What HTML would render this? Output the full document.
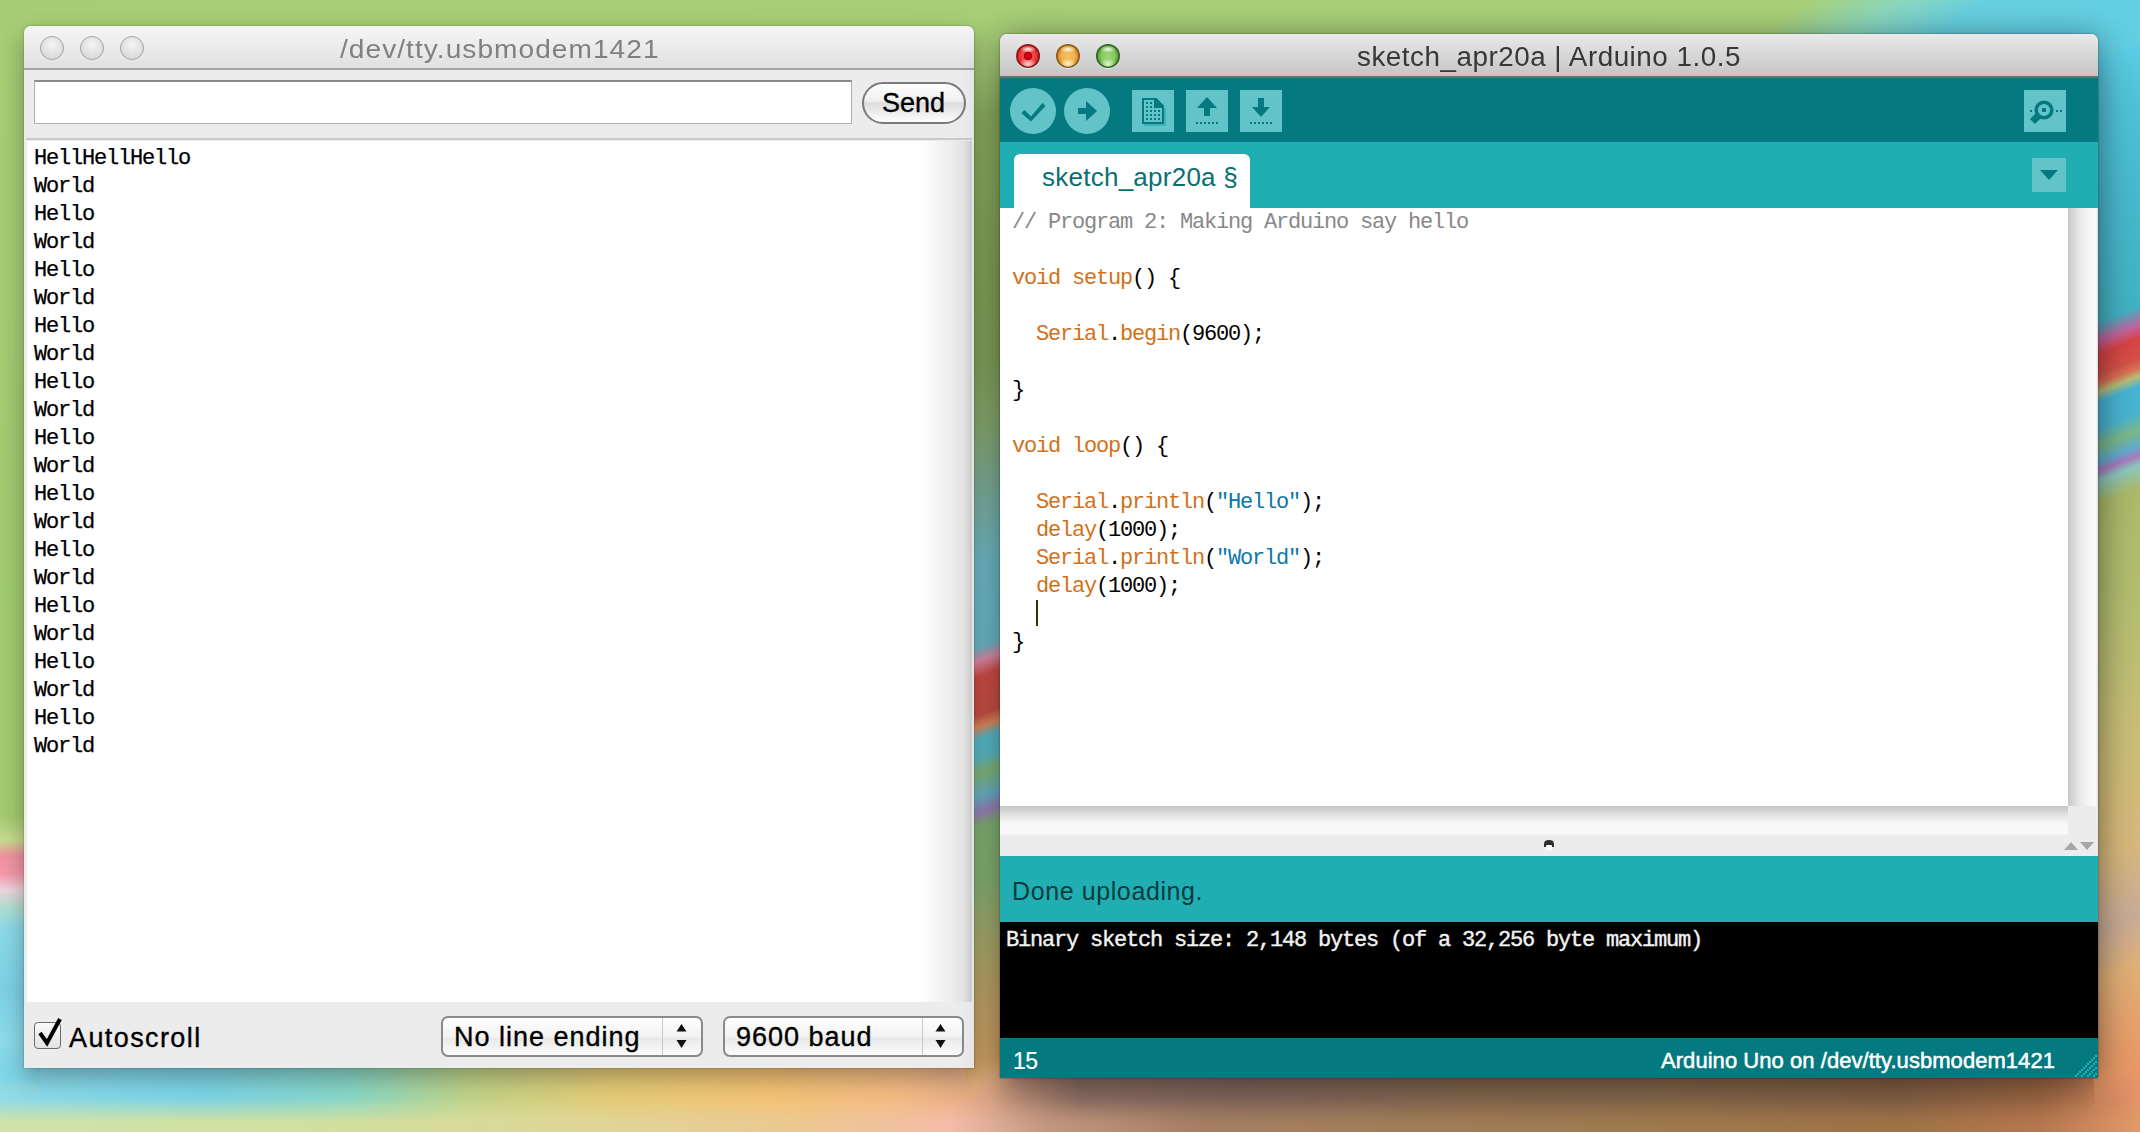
<!DOCTYPE html>
<html><head><meta charset="utf-8">
<style>
*{box-sizing:border-box;margin:0;padding:0}
html,body{width:2140px;height:1132px;overflow:hidden;position:relative;background:#a5cc73;font-family:"Liberation Sans",sans-serif}
.abs{position:absolute}
.mono{font-family:"Liberation Mono",monospace;font-size:22px;letter-spacing:-1.2px;line-height:28px;white-space:pre}
#bg{position:absolute;left:0;top:0;width:2140px;height:1132px;overflow:hidden}
</style></head><body>
<div id="bg">
  <!-- top strip -->
  <div class="abs" style="left:0;top:0;width:2400px;height:80px;transform:skewX(-55deg);transform-origin:0 0;background:linear-gradient(90deg,#a7ce76 0,#a8cf78 1810px,#8cd6bc 1900px,#66cfe0 1990px,#5ccde4 2400px)"></div>
  <!-- bottom strip upper -->
  <div class="abs" style="left:0;top:1040px;width:2140px;height:92px;background:linear-gradient(90deg,#8cdcec 0,#7cd4e6 200px,#88d8c8 350px,#c0d488 470px,#e4cc78 600px,#f4c474 760px,#f4bc84 900px,#e0a888 990px,#98786c 1080px,#8c6e64 1250px,#907056 1450px,#907052 1650px,#8e684a 1900px,#a8704a 2040px,#e8946a 2140px)"></div>
  <!-- bottom strip lower -->
  <div class="abs" style="left:0;top:1098px;width:2140px;height:34px;-webkit-mask-image:linear-gradient(180deg,transparent 0,#000 24px);background:linear-gradient(90deg,#d0e2a8 0,#cfe0a0 300px,#dcd898 540px,#ecc890 800px,#f4bca8 950px,#c49880 1050px,#a88064 1200px,#a07c50 1600px,#a07448 1900px,#b87850 2040px,#e09a68 2140px)"></div>
  <!-- left strip -->
  <div class="abs" style="left:0;top:60px;width:40px;height:1072px;-webkit-mask-image:linear-gradient(180deg,#000 1008px,transparent 1040px);background:linear-gradient(180deg,#a7ce76 0,#a2cc70 540px,#a4cc70 756px,#c8dc90 780px,#f0929f 796px,#f49aaa 814px,#f0d4de 830px,#b0e0d0 848px,#8cdaea 868px,#7cd2e4 930px,#8cdcec 980px,#7cd4e6 1020px,#d0e2a8 1048px,#d6e09c 1072px)"></div>
  <!-- middle strip -->
  <div class="abs" style="left:965px;top:60px;width:45px;height:1072px;transform:skewY(-20deg);transform-origin:22px 0;-webkit-mask-image:linear-gradient(180deg,transparent 0,#000 50px,#000 1004px,transparent 1036px);background:linear-gradient(180deg,#a0c470 0,#90b462 60px,#88aa5c 200px,#86a85e 300px,#8cb072 360px,#84b49a 420px,#74c2d0 500px,#70c0d0 584px,#e890b0 598px,#d85048 614px,#d05448 652px,#e89060 664px,#5cc2d0 676px,#5ec2d0 694px,#88c080 710px,#70b8d0 734px,#a088c0 750px,#88b878 764px,#8ab878 820px,#b0b070 880px,#c8a868 940px,#d8a868 1000px,#e8b880 1035px,#f0b8a0 1072px)"></div>
  <!-- right strip -->
  <div class="abs" style="left:2094px;top:60px;width:46px;height:1072px;transform:skewY(-21deg);transform-origin:4px 0;-webkit-mask-image:linear-gradient(180deg,#000 1018px,transparent 1050px);background:linear-gradient(180deg,#5ccde4 0,#50c2d6 60px,#48b8cc 160px,#42b2c4 262px,#c8609a 282px,#d84444 294px,#d45048 314px,#d87456 324px,#b8c078 332px,#48b4d4 342px,#4ab4d2 368px,#7cb888 386px,#62acd0 402px,#a87cc0 411px,#8cc8c0 421px,#acba6a 444px,#b4be72 560px,#ccbe78 700px,#d8b87c 800px,#c8ac98 870px,#e0b078 920px,#e89c68 1000px,#e8946a 1072px)"></div>
</div>

<!-- SERIAL MONITOR WINDOW -->
<div id="sw" class="abs" style="left:24px;top:26px;width:950px;height:1042px;background:#ececec;border-radius:7px 7px 0 0;box-shadow:0 10px 24px rgba(0,0,0,.32),0 0 2px rgba(0,0,0,.35)">
  <!-- title bar -->
  <div class="abs" style="left:0;top:0;width:950px;height:42px;border-radius:7px 7px 0 0;background:linear-gradient(#f6f6f6,#e0e0e0)"></div>
  <div class="abs" style="left:0;top:42px;width:950px;height:2px;background:#a3a3a3"></div>
  <div class="abs" style="left:16px;top:10px;width:24px;height:24px;border-radius:50%;border:1.5px solid #a4a4a4;background:radial-gradient(circle at 50% 35%,#f4f4f4,#dcdcdc 70%)"></div>
  <div class="abs" style="left:56px;top:10px;width:24px;height:24px;border-radius:50%;border:1.5px solid #a4a4a4;background:radial-gradient(circle at 50% 35%,#f4f4f4,#dcdcdc 70%)"></div>
  <div class="abs" style="left:96px;top:10px;width:24px;height:24px;border-radius:50%;border:1.5px solid #a4a4a4;background:radial-gradient(circle at 50% 35%,#f4f4f4,#dcdcdc 70%)"></div>
  <div class="abs" style="left:316px;top:8px;font-size:26px;letter-spacing:0.97px;transform:scaleX(1.08);transform-origin:0 0;color:#808080;white-space:pre">/dev/tty.usbmodem1421</div>
  <!-- input -->
  <div class="abs" style="left:10px;top:54px;width:818px;height:44px;background:#fff;border:1px solid #b0b0b0;border-top:2px solid #8c8c8c"></div>
  <!-- send -->
  <div class="abs" style="left:838px;top:56px;width:104px;height:42px;border-radius:21px;border:2px solid #7a7a7a;background:linear-gradient(#fdfdfd,#f0f0f0 45%,#dcdcdc 50%,#f0f0f0 80%,#fdfdfd)"></div>
  <div class="abs" style="left:858px;top:62px;font-size:27px;color:#000;-webkit-text-stroke:0.35px #000;white-space:pre">Send</div>
  <!-- separator -->
  <div class="abs" style="left:2px;top:112px;width:946px;height:2px;background:#c9c9c9"></div>
  <!-- text area -->
  <div class="abs" style="left:3px;top:115px;width:945px;height:861px;background:#fff"></div>
  <div class="abs" style="left:896px;top:115px;width:52px;height:861px;background:linear-gradient(90deg,rgba(255,255,255,0),#e4e4e4 85%,#cfcfcf)"></div>
  <div class="abs mono" style="left:10px;top:119px;color:#000;-webkit-text-stroke:0.25px #000">HellHellHello
World
Hello
World
Hello
World
Hello
World
Hello
World
Hello
World
Hello
World
Hello
World
Hello
World
Hello
World
Hello
World</div>
  <!-- bottom bar -->
  <div class="abs" style="left:10px;top:996px;width:27px;height:27px;border-radius:4px;border:1.5px solid #6b6b6b;background:linear-gradient(#fafafa,#e2e2e2)"></div>
  <svg class="abs" style="left:10px;top:990px" width="32" height="34" viewBox="0 0 32 34"><path d="M6 17 L13 27 L26 3" stroke="#000" stroke-width="4" fill="none"/></svg>
  <div class="abs" style="left:45px;top:997px;font-size:27px;letter-spacing:1.4px;color:#000;-webkit-text-stroke:0.35px #000;white-space:pre">Autoscroll</div>
  <!-- dropdown 1 -->
  <div class="abs" style="left:417px;top:990px;width:262px;height:41px;border-radius:7px;border:2px solid #8a8a8a;background:linear-gradient(#ffffff,#f3f3f3 50%,#e9e9e9 55%,#fbfbfb)"></div>
  <div class="abs" style="left:638px;top:992px;width:1px;height:37px;background:#c8c8c8"></div>
  <div class="abs" style="left:430px;top:996px;font-size:27px;letter-spacing:1px;color:#000;-webkit-text-stroke:0.35px #000;white-space:pre">No line ending</div>
  <svg class="abs" style="left:650px;top:998px" width="16" height="26"><path d="M7.5 0 L12.5 7.5 L2.5 7.5Z M2.5 16 L12.5 16 L7.5 24Z" fill="#111"/></svg>
  <!-- dropdown 2 -->
  <div class="abs" style="left:699px;top:990px;width:241px;height:41px;border-radius:7px;border:2px solid #8a8a8a;background:linear-gradient(#ffffff,#f3f3f3 50%,#e9e9e9 55%,#fbfbfb)"></div>
  <div class="abs" style="left:898px;top:992px;width:1px;height:37px;background:#c8c8c8"></div>
  <div class="abs" style="left:712px;top:996px;font-size:27px;letter-spacing:1px;color:#000;-webkit-text-stroke:0.35px #000;white-space:pre">9600 baud</div>
  <svg class="abs" style="left:909px;top:998px" width="16" height="26"><path d="M7.5 0 L12.5 7.5 L2.5 7.5Z M2.5 16 L12.5 16 L7.5 24Z" fill="#111"/></svg>
</div>

<!-- ARDUINO WINDOW -->
<div id="aw" class="abs" style="left:1000px;top:34px;width:1098px;height:1044px;background:#ececec;border-radius:7px 7px 0 0;box-shadow:0 16px 40px rgba(0,0,0,.32),0 0 28px rgba(0,0,0,.24),0 0 2px rgba(0,0,0,.5)">
  <div class="abs" style="left:0;top:0;width:1098px;height:42px;border-radius:7px 7px 0 0;background:linear-gradient(#e9e9e9,#c5c5c5)"></div>
  <div class="abs" style="left:0;top:42px;width:1098px;height:2px;background:#6e6e6e"></div>
  <div class="abs" style="left:16px;top:10px;width:24px;height:24px;border-radius:50%;box-shadow:inset 0 0 0 1.3px #7e1414,0 1px 1px rgba(255,255,255,.6);background:radial-gradient(circle at 50% 50%,#cf0010 0,#d20012 2.6px,#9c0a10 4px,transparent 4.6px),radial-gradient(ellipse 8px 3.5px at 50% 22%,rgba(255,255,255,.95),rgba(255,255,255,0)),radial-gradient(ellipse 9px 6px at 50% 84%,rgba(255,225,225,.95),rgba(255,225,225,0)),radial-gradient(circle at 50% 50%,#ff5a5a 0,#ec3c3c 8px,#c02020 10.5px,#8a1010 12px)"></div>
  <div class="abs" style="left:56px;top:10px;width:24px;height:24px;border-radius:50%;box-shadow:inset 0 0 0 1.3px #845410,0 1px 1px rgba(255,255,255,.6);background:radial-gradient(ellipse 8px 3.5px at 50% 22%,rgba(255,255,240,.95),rgba(255,255,255,0)),radial-gradient(ellipse 9px 6px at 50% 84%,rgba(255,250,210,.95),rgba(255,250,210,0)),radial-gradient(circle at 50% 50%,#f8c060 0,#f0b050 7px,#d08828 10px,#8a5a10 12px)"></div>
  <div class="abs" style="left:96px;top:10px;width:24px;height:24px;border-radius:50%;box-shadow:inset 0 0 0 1.3px #2c5c1c,0 1px 1px rgba(255,255,255,.6);background:radial-gradient(ellipse 8px 3.5px at 50% 22%,rgba(245,255,240,.95),rgba(255,255,255,0)),radial-gradient(ellipse 9px 6px at 50% 84%,rgba(235,250,215,.95),rgba(235,250,215,0)),radial-gradient(circle at 50% 50%,#98d870 0,#88c860 7px,#58a038 10px,#2c5c1c 12px)"></div>
  <div class="abs" style="left:357px;top:8px;font-size:27px;letter-spacing:0.5px;transform:scaleX(1.03);transform-origin:0 0;color:#373737;white-space:pre">sketch_apr20a | Arduino 1.0.5</div>
  <!-- toolbar -->
  <div id="tb" class="abs" style="left:0;top:44px;width:1098px;height:64px;background:#047a80">
  <svg class="abs" style="left:0;top:0" width="1098" height="64" viewBox="0 0 1098 64" shape-rendering="crispEdges">
    <g fill="#62c3c8">
      <circle cx="33" cy="33" r="23" shape-rendering="geometricPrecision"/>
      <circle cx="87" cy="33" r="23" shape-rendering="geometricPrecision"/>
      <rect x="132" y="12" width="42" height="42"/>
      <rect x="186" y="12" width="42" height="42"/>
      <rect x="240" y="12" width="42" height="42"/>
      <rect x="1024" y="12" width="42" height="42"/>
    </g>
    <g fill="#047a80" stroke="none">
      <path d="M21.5 35 L24.5 32 L31 38.5 L42.5 25 L45.5 28 L31 43.5 Z" shape-rendering="geometricPrecision"/>
      <rect x="78" y="30" width="9" height="6"/>
      <path d="M86 23 L97 33 L86 43 Z" shape-rendering="geometricPrecision"/>
      <!-- new page -->
      <path d="M142 20 H156 L164 28 V46 H142 Z M144 22 V44 H162 V30 H154 V22 Z"/>
      <path d="M154 20 L164 30 H154 Z" shape-rendering="geometricPrecision"/>
      <rect x="146" y="24" width="2" height="2"/><rect x="150" y="24" width="2" height="2"/>
      <rect x="146" y="28" width="2" height="2"/><rect x="150" y="28" width="2" height="2"/>
      <rect x="146" y="32" width="2" height="2"/><rect x="150" y="32" width="2" height="2"/><rect x="154" y="32" width="2" height="2"/><rect x="158" y="32" width="2" height="2"/>
      <rect x="146" y="36" width="2" height="2"/><rect x="150" y="36" width="2" height="2"/><rect x="154" y="36" width="2" height="2"/><rect x="158" y="36" width="2" height="2"/>
      <rect x="146" y="40" width="2" height="2"/><rect x="150" y="40" width="2" height="2"/><rect x="154" y="40" width="2" height="2"/><rect x="158" y="40" width="2" height="2"/>
      <!-- open -->
      <path d="M197 30 L207 19 L217 30 H210 V38 H204 V30 Z" shape-rendering="geometricPrecision"/>
      <rect x="196" y="44" width="2" height="2"/><rect x="200" y="44" width="2" height="2"/><rect x="204" y="44" width="2" height="2"/><rect x="208" y="44" width="2" height="2"/><rect x="212" y="44" width="2" height="2"/><rect x="216" y="44" width="2" height="2"/>
      <!-- save -->
      <path d="M258 20 H264 V29 H270 L261 39 L252 29 H258 Z" shape-rendering="geometricPrecision"/>
      <rect x="250" y="44" width="2" height="2"/><rect x="254" y="44" width="2" height="2"/><rect x="258" y="44" width="2" height="2"/><rect x="262" y="44" width="2" height="2"/><rect x="266" y="44" width="2" height="2"/><rect x="270" y="44" width="2" height="2"/>
      <!-- serial -->
      <circle cx="1044" cy="32" r="7.8" fill="none" stroke="#047a80" stroke-width="3.6" shape-rendering="geometricPrecision"/>
      <rect x="1042" y="30" width="4" height="4"/>
      <path d="M1036 35 L1041 40 L1035 46 L1030 41 Z" shape-rendering="geometricPrecision"/>
      <rect x="1030" y="32" width="2" height="2"/><rect x="1056" y="32" width="2" height="2"/><rect x="1060" y="32" width="2" height="2"/>
    </g>
    <path d="M164 30 V46 H144 V48 H166 V30 Z" fill="#3cb5ba"/>
  </svg>
  </div>
  <!-- tab bar -->
  <div class="abs" style="left:0;top:108px;width:1098px;height:66px;background:#20aeb2"></div>
  <div class="abs" style="left:14px;top:120px;width:236px;height:54px;background:#fff;border-radius:6px 6px 0 0"></div>
  <div class="abs" style="left:42px;top:128px;font-size:26px;letter-spacing:0.25px;color:#0a6f73;white-space:pre">sketch_apr20a §</div>
  <div class="abs" style="left:1032px;top:124px;width:34px;height:34px;background:#62c3c8"></div>
  <svg class="abs" style="left:1040px;top:136px" width="18" height="10"><path d="M0 0H18L9 10Z" fill="#047a80"/></svg>
  <!-- editor -->
  <div class="abs" style="left:0;top:174px;width:1068px;height:598px;background:#fff"></div>
  <div class="abs" style="left:1068px;top:174px;width:30px;height:598px;background:linear-gradient(90deg,#c8c8c8,#e6e6e6 35%,#f7f7f7 70%,#fafafa 93%,#dcdcdc)"></div>
  <div class="abs mono" style="left:12px;top:175px;color:#000"><span style="color:#888">// Program 2: Making Arduino say hello</span>

<span style="color:#d2711a">void</span> <span style="color:#d2711a">setup</span>() {

  <span style="color:#d2711a">Serial</span>.<span style="color:#d2711a">begin</span>(9600);

}

<span style="color:#d2711a">void</span> <span style="color:#d2711a">loop</span>() {

  <span style="color:#d2711a">Serial</span>.<span style="color:#d2711a">println</span>(<span style="color:#0b78a8">"Hello"</span>);
  <span style="color:#d2711a">delay</span>(1000);
  <span style="color:#d2711a">Serial</span>.<span style="color:#d2711a">println</span>(<span style="color:#0b78a8">"World"</span>);
  <span style="color:#d2711a">delay</span>(1000);

}</div>
  <div class="abs" style="left:36px;top:566px;width:2px;height:26px;background:#333300"></div>
  <!-- horizontal scroll -->
  <div class="abs" style="left:0;top:772px;width:1068px;height:30px;background:linear-gradient(#c4c4c4,#e2e2e2 30%,#f8f8f8 60%,#fafafa 90%,#ececec)"></div>
  <div class="abs" style="left:1068px;top:772px;width:30px;height:30px;background:#ececec"></div>
  <!-- splitter -->
  <div class="abs" style="left:0;top:802px;width:1098px;height:20px;background:#ececec"></div>
  <svg class="abs" style="left:1064px;top:807px" width="32" height="10"><path d="M0 9L7 1L14 9Z M16 1H30L23 9Z" fill="#a6a6a6"/></svg>
  <svg class="abs" style="left:543px;top:805px" width="12" height="12"><path d="M1 8 V5 Q1 1 6 1 Q11 1 11 5 V8 Z" fill="#2e2e2e"/><rect x="3" y="6" width="6" height="5" rx="1" fill="#fff"/></svg>
  <!-- status -->
  <div class="abs" style="left:0;top:822px;width:1098px;height:66px;background:#20aeb2"></div>
  <div class="abs" style="left:12px;top:843px;font-size:25px;letter-spacing:0.6px;color:#083c3e;white-space:pre">Done uploading.</div>
  <!-- console -->
  <div class="abs" style="left:0;top:888px;width:1098px;height:116px;background:#000"></div>
  <div class="abs mono" style="left:6px;top:893px;color:#f2f2f2;-webkit-text-stroke:0.4px #f2f2f2">Binary sketch size: 2,148 bytes (of a 32,256 byte maximum)</div>
  <!-- line status -->
  <div class="abs" style="left:0;top:1004px;width:1098px;height:40px;background:#047a80"></div>
  <div class="abs" style="left:13px;top:1014px;font-size:23px;letter-spacing:-0.6px;-webkit-text-stroke:0.2px #fff;color:#fff;white-space:pre">15</div>
  <svg class="abs" style="left:0;top:0" width="1098" height="1044" viewBox="0 0 1098 1044"><g fill="#22b0b4"><rect x="1075" y="1041" width="2" height="2"/><rect x="1077" y="1039" width="2" height="2"/><rect x="1079" y="1037" width="2" height="2"/><rect x="1081" y="1035" width="2" height="2"/><rect x="1083" y="1033" width="2" height="2"/><rect x="1085" y="1031" width="2" height="2"/><rect x="1087" y="1029" width="2" height="2"/><rect x="1089" y="1027" width="2" height="2"/><rect x="1091" y="1025" width="2" height="2"/><rect x="1093" y="1023" width="2" height="2"/><rect x="1095" y="1021" width="2" height="2"/><rect x="1081" y="1041" width="2" height="2"/><rect x="1083" y="1039" width="2" height="2"/><rect x="1085" y="1037" width="2" height="2"/><rect x="1087" y="1035" width="2" height="2"/><rect x="1089" y="1033" width="2" height="2"/><rect x="1091" y="1031" width="2" height="2"/><rect x="1093" y="1029" width="2" height="2"/><rect x="1095" y="1027" width="2" height="2"/><rect x="1087" y="1041" width="2" height="2"/><rect x="1089" y="1039" width="2" height="2"/><rect x="1091" y="1037" width="2" height="2"/><rect x="1093" y="1035" width="2" height="2"/><rect x="1095" y="1033" width="2" height="2"/><rect x="1093" y="1041" width="2" height="2"/><rect x="1095" y="1039" width="2" height="2"/></g></svg>
  <div class="abs" style="left:661px;top:1014px;font-size:22px;letter-spacing:0.05px;-webkit-text-stroke:0.5px #fff;color:#fff;white-space:pre">Arduino Uno on /dev/tty.usbmodem1421</div>
</div>
</body></html>
